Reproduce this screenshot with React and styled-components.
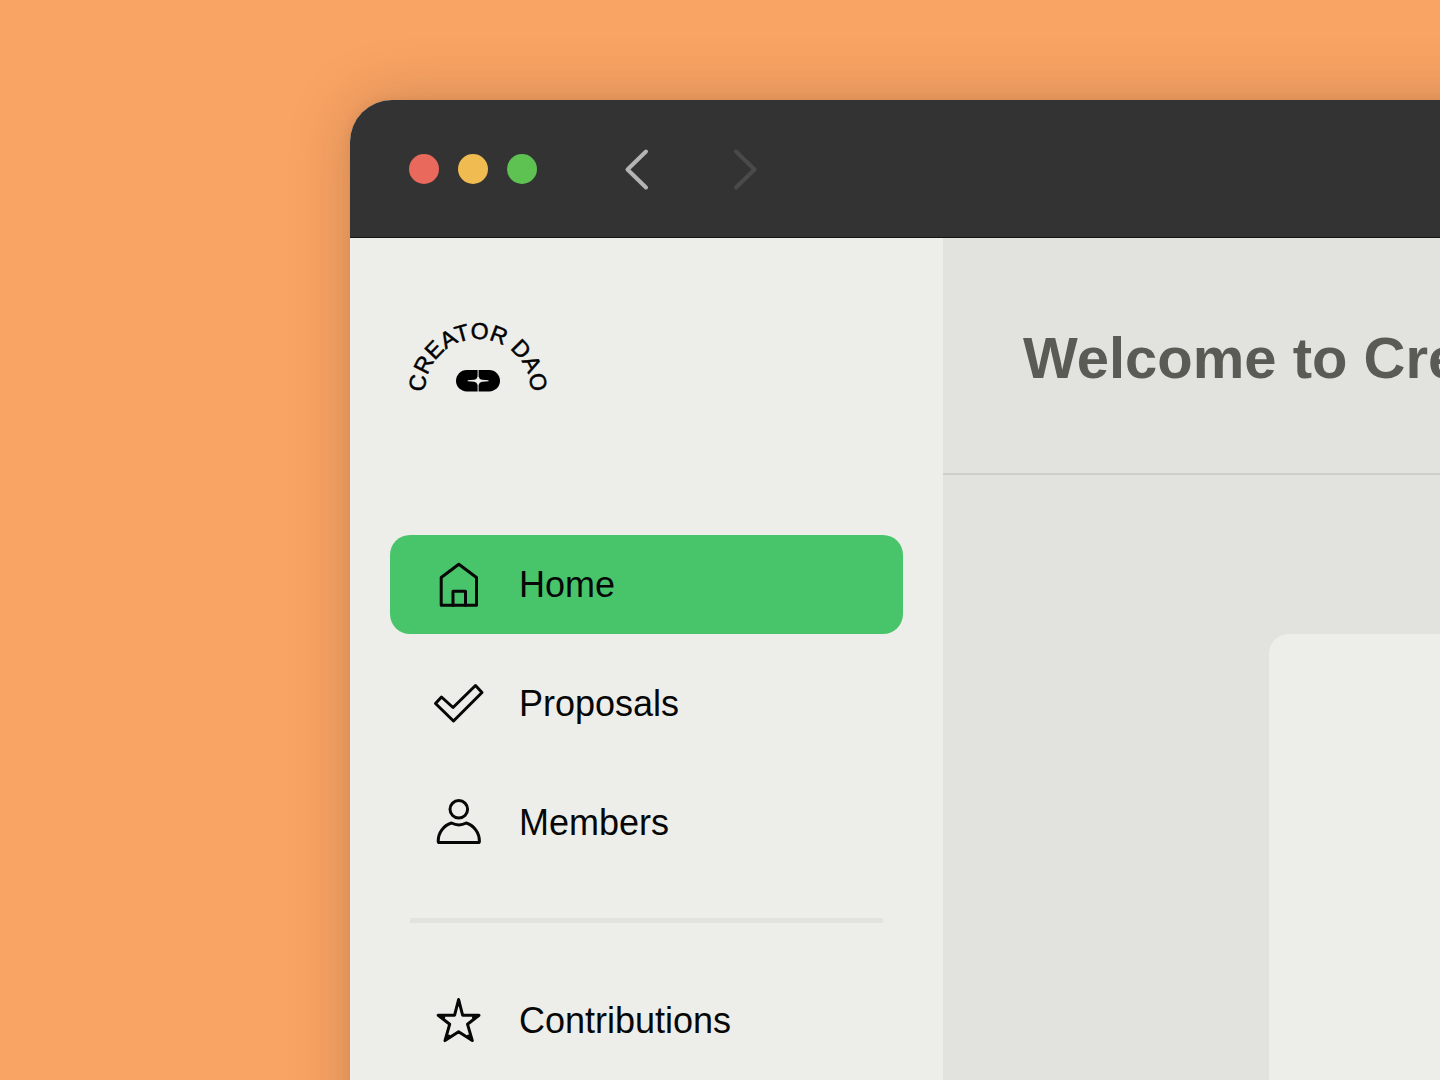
import React from "react";
import styled, { createGlobalStyle } from "styled-components";

const GlobalStyle = createGlobalStyle`
  * {
    box-sizing: border-box;
  }
  body {
    margin: 0;
    background-color: #f9a364;
    font-family: "Liberation Sans", Arial, sans-serif;
    color: #060706;
  }
`;

const Page = styled.div`
  min-height: 100vh;
  padding: 100px 0 0 350px;
  display: flex;
  overflow: hidden;
`;

// runs past the right and bottom edges so that its shadow has no end there
const Browser = styled.div`
  flex: 1;
  min-width: 0;
  margin: 0 -80px -80px 0;
  display: flex;
  flex-direction: column;
  border-top-left-radius: 42px;
  background-color: #edeee9;
  box-shadow: 0 0 60px rgba(90, 60, 40, 0.26), 0 0 10px rgba(90, 60, 40, 0.1);
`;

const TitleBar = styled.header`
  height: 138px;
  padding: 0 59px;
  display: flex;
  align-items: center;
  gap: 81px;
  border-top-left-radius: 42px;
  border-bottom: 1px solid #141414;
  background-color: #333333;
`;

const Lights = styled.div`
  display: flex;
  gap: 19px;
`;

const Light = styled.button`
  width: 30px;
  height: 30px;
  padding: 0;
  border: none;
  border-radius: 50%;
  background-color: ${(props) => props.$color};
`;

const History = styled.div`
  display: flex;
  gap: 68px;
`;

const HistoryButton = styled.button`
  width: 40px;
  height: 48px;
  padding: 0;
  border: none;
  background: transparent;
  color: ${(props) => (props.disabled ? "#4a4a4a" : "#b4b4b4")};

  svg {
    display: block;
  }
`;

const Body = styled.div`
  flex: 1;
  display: flex;
`;

const Sidebar = styled.aside`
  flex: none;
  width: 593px;
  padding: 80px 40px 10px;
  background-color: #edeee9;
`;

const LogoLink = styled.a`
  display: block;
  width: 150px;
  height: 80px;
  margin: 0 0 137px 14px;
  color: #000000;
`;

const NavList = styled.ul`
  margin: 0;
  padding: 0;
  display: flex;
  flex-direction: column;
  gap: 20px;
  list-style: none;
`;

const NavLink = styled.a`
  height: 99px;
  padding: 0 44px;
  display: flex;
  align-items: center;
  gap: 36px;
  border-radius: 20px;
  background-color: ${(props) => (props.$active ? "#48c56a" : "transparent")};
  color: inherit;
  font-size: 36px;
  line-height: 44px;
  text-decoration: none;
`;

const Divider = styled.hr`
  height: 5px;
  margin: 46px 20px 48px;
  border: none;
  background-color: #e2e3df;
`;

const Main = styled.main`
  flex: 1;
  min-width: 0;
  display: flex;
  flex-direction: column;
  overflow: hidden;
  background-color: #e2e3de;
`;

const PageHeader = styled.div`
  height: 237px;
  padding: 4px 80px 0;
  display: flex;
  align-items: center;
  border-bottom: 2px solid #cdcfca;
`;

const PageTitle = styled.h1`
  margin: 0;
  color: #5a5b55;
  font-size: 58px;
  line-height: 64px;
  white-space: nowrap;
`;

const Content = styled.div`
  flex: 1;
  padding: 159px 0 0 326px;
  display: flex;
`;

const Card = styled.section`
  flex: 1;
  border-top-left-radius: 20px;
  background-color: #edeee9;
`;

const icons = {
  home: (
    <>
      <path d="M7.200 17.500 24.800 4.200 42.500 17.500V45.200H7.200Z" />
      <path d="M19 45.200V31.200h12.500v14" />
    </>
  ),
  proposals: <path d="M1.500 24.500 7.500 18 19 28.500 41.500 6.500 48 13.500 19.500 42Z" />,
  members: (
    <>
      <circle cx="24.800" cy="11.300" r="8.800" />
      <path d="M17.500 25C9.500 27.500 4.200 34.500 4.200 43.200Q4.200 44.600 5.600 44.600H44Q45.400 44.600 45.400 43.200C45.400 34.500 40 27.500 32.200 25Q25 28.800 17.500 25Z" />
    </>
  ),
  star: (
    <>
      <path d="M24.600 3.500 28.600 19.200 45 19.200 33.500 28.200 38.300 44.600 24.600 35.800 11 44.600 15.700 28.200 4.200 19.200 20.600 19.200Z" />
      <path d="M24.600 4.500V9M44 19.600 39.500 21.500M37.500 43.500 34.500 40M11.800 43.500 14.800 40M5.200 19.600 9.700 21.500" />
    </>
  ),
};

const Icon = ({ name }) => (
  <svg
    width="49"
    height="49"
    viewBox="0 0 49 49"
    fill="none"
    stroke="currentColor"
    strokeWidth="3"
    strokeLinejoin="round"
    strokeLinecap="round"
    overflow="visible"
    aria-hidden="true"
  >
    {icons[name]}
  </svg>
);

const Logo = () => (
  <svg width="150" height="80" viewBox="0 0 150 80" overflow="visible">
    <path id="arch" d="M21 78V74A53 53 0 0 1 127 74V78" fill="none" />
    <text
      fontSize="23"
      fill="currentColor"
      stroke="currentColor"
      strokeWidth="0.5"
      textAnchor="middle"
    >
      <textPath href="#arch" startOffset="50%">
        CREATOR DAO
      </textPath>
    </text>
    <rect x="52" y="52" width="44" height="21.500" rx="10.700" fill="currentColor" />
    <path
      d="M74.600 51.500V58.500Q75.200 61.400 78 61.800L84.500 62.300V63.300L78 63.800Q75.200 64.200 74.600 67V74H73.600V67Q73 64.200 70.200 63.800L63.700 63.300V62.300L70.200 61.800Q73 61.400 73.600 58.500V51.500Z"
      fill="#edeee9"
    />
  </svg>
);

const links = [
  { label: "Home", icon: "home", active: true },
  { label: "Proposals", icon: "proposals" },
  { label: "Members", icon: "members" },
];

const NavItem = ({ label, icon, active }) => (
  <li>
    <NavLink href="#" $active={active} aria-current={active ? "page" : undefined}>
      <Icon name={icon} />
      {label}
    </NavLink>
  </li>
);

const Chevron = ({ d }) => (
  <svg
    width="40"
    height="48"
    fill="none"
    stroke="currentColor"
    strokeWidth="4"
    strokeLinecap="round"
    strokeLinejoin="round"
    aria-hidden="true"
  >
    <path d={d} />
  </svg>
);

const App = () => {
  return (
    <>
      <GlobalStyle />
      <Page>
        <Browser>
          <TitleBar>
            <Lights>
              <Light $color="#e9695c" aria-label="Close" />
              <Light $color="#f0bb50" aria-label="Minimize" />
              <Light $color="#5dc252" aria-label="Zoom" />
            </Lights>
            <History>
              <HistoryButton aria-label="Back">
                <Chevron d="M28 6.500 9.500 24.500 28 42.500" />
              </HistoryButton>
              <HistoryButton aria-label="Forward" disabled>
                <Chevron d="M10 6.500 28.500 24.500 10 42.500" />
              </HistoryButton>
            </History>
          </TitleBar>
          <Body>
            <Sidebar>
              <LogoLink href="#" aria-label="Creator DAO">
                <Logo />
              </LogoLink>
              <nav>
                <NavList>
                  {links.map((link) => (
                    <NavItem key={link.label} {...link} />
                  ))}
                </NavList>
                <Divider />
                <NavList>
                  <NavItem label="Contributions" icon="star" />
                </NavList>
              </nav>
            </Sidebar>
            <Main>
              <PageHeader>
                <PageTitle>Welcome to Creator DAO</PageTitle>
              </PageHeader>
              <Content>
                <Card />
              </Content>
            </Main>
          </Body>
        </Browser>
      </Page>
    </>
  );
};

export default App;
